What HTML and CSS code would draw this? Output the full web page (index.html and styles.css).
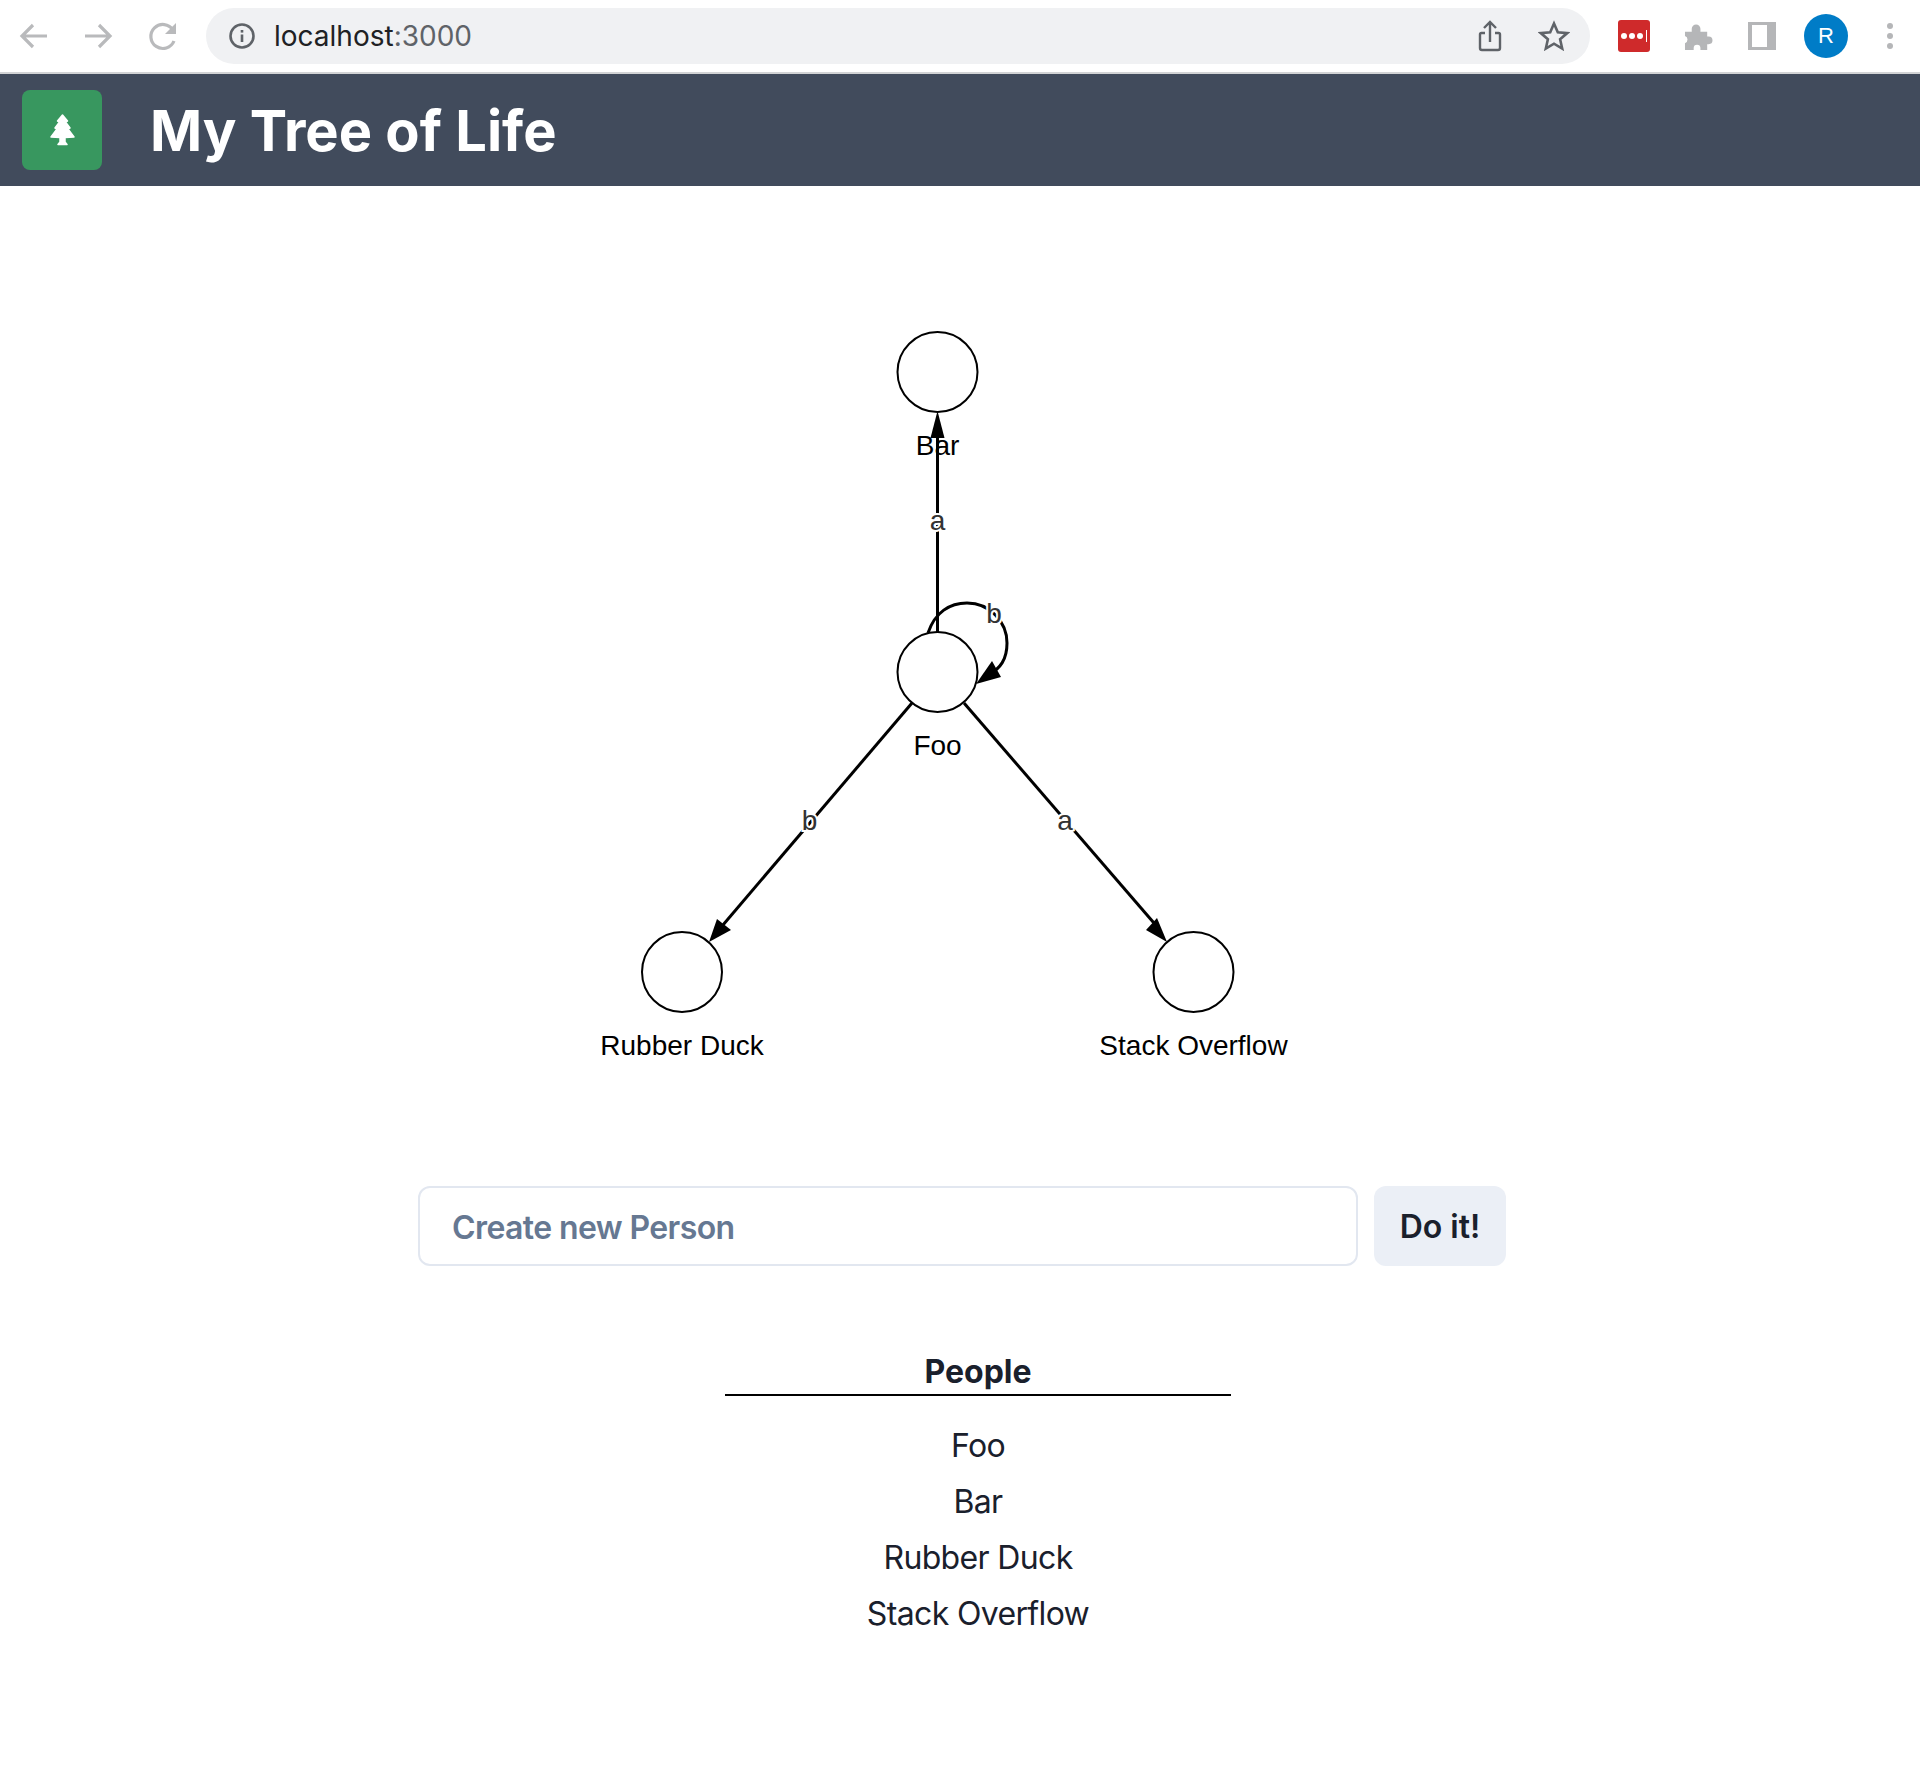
FILE: index.html
```html
<!DOCTYPE html>
<html lang="en">
<head>
<meta charset="utf-8">
<title>My Tree of Life</title>
<link rel="stylesheet" href="styles.css">
</head>
<body>
<div class="browser">
  <div class="nav">
    <svg class="ic" width="32" height="32" viewBox="0 0 32 32"><path d="M29 16H5M15 5 4 16l11 11" class="s-grey"/></svg>
    <svg class="ic" width="32" height="32" viewBox="0 0 32 32"><path d="M3 16h24M17 5l11 11-11 11" class="s-grey"/></svg>
    <svg class="ic" width="32" height="32" viewBox="-2 0 32 32"><path d="M26 21a12 12 0 1 1-1-11" class="s-grey"/><path d="M28 3v11H17z" class="f-grey"/></svg>
  </div>
  <div class="omni">
    <svg width="28" height="28" viewBox="0 0 28 28"><circle cx="14" cy="14" r="11.5" fill="none" stroke="#5f6368" stroke-width="2.6"/><rect x="12.7" y="12.5" width="2.6" height="7.5" fill="#5f6368"/><rect x="12.7" y="8" width="2.6" height="2.6" fill="#5f6368"/></svg>
    <span class="url">localhost<span class="port">:3000</span></span>
    <span class="grow"></span>
    <svg width="28" height="32" viewBox="0 0 28 32"><path d="M9 13H5.500A1.500 1.500 0 0 0 4 14.500V28a2 2 0 0 0 2 2h16a2 2 0 0 0 2-2V14.500A1.500 1.500 0 0 0 22.500 13H19M14 22V3M8 8l6-6 6 6" fill="none" stroke="#5f6368" stroke-width="2.4"/></svg>
    <svg class="star" width="32" height="32" viewBox="0 0 32 32"><path d="m16 3.500 3.800 8.700 9.400.9-7.100 6.200 2.100 9.200-8.200-4.800-8.200 4.800 2.100-9.200-7.100-6.200 9.400-.9z" fill="none" stroke="#5f6368" stroke-width="2.600"/></svg>
  </div>
  <div class="exts">
    <div class="lastpass"><i></i><i></i><i></i><b></b></div>
    <svg class="puzzle" width="29" height="28" viewBox="0 0 30 29"><path d="M1 10h7V7a4.500 4.500 0 0 1 9 0v3h7v5h1.500a4 4 0 0 1 0 8H24v6h-7v-2a3.500 3.500 0 0 0-7 0v2H1v-7a4 4 0 0 0 0-7.500z" fill="#b5b6b8"/></svg>
    <div class="panel"></div>
    <div class="avatar">R</div>
    <div class="dots"><i></i><i></i><i></i></div>
  </div>
</div>

<header class="topbar">
  <div class="logo">
    <svg class="tree" width="25" height="32" viewBox="0 0 25 32"><path d="M12.500 1 17.500 7 15.500 8 20 14 18 15 24 23 15 23.500 15 28 17 30.500 8 30.500 10 28 10 23.500 1 23 7 15 5 14 9.500 8 7.500 7z"/></svg>
  </div>
  <h1 class="title">My Tree of Life</h1>
</header>

<main class="main">
  <svg class="graph" width="1920" height="972" viewBox="0 186 1920 972">
    <g class="edges">
      <path d="M937.500 632V420"/>
      <path d="M928 633C935 612 950 603 967 603C990 603 1007 622 1007 643C1007 660 1000 668 990 674"/>
      <path d="M912 703 717 932"/>
      <path d="M964 703 1160 930"/>
    </g>
    <g class="heads">
      <polygon points="937.500,411 930.500,438 944.500,438"/>
      <polygon points="976,684 992,661 1001,677"/>
      <polygon points="709,942 717,919 731,930"/>
      <polygon points="1167,942 1146,930 1157,918"/>
    </g>
    <g class="nodes">
      <circle cx="937.500" cy="372" r="40"/>
      <circle cx="937.500" cy="672" r="40"/>
      <circle cx="682" cy="972" r="40"/>
      <circle cx="1193.500" cy="972" r="40"/>
    </g>
    <g class="edge-labels">
      <text x="937.500" y="530">a</text>
      <text x="994" y="623">b</text>
      <text x="809.500" y="830">b</text>
      <text x="1065" y="830">a</text>
    </g>
    <g class="node-labels">
      <text x="937.500" y="455">Bar</text>
      <text x="937.500" y="755">Foo</text>
      <text x="682" y="1055">Rubber Duck</text>
      <text x="1193.500" y="1055">Stack Overflow</text>
    </g>
  </svg>

  <form class="create">
    <input class="create-input" type="text" placeholder="Create new Person">
    <button class="create-btn" type="button">Do it!</button>
  </form>

  <section class="people">
    <h2 class="people-head">People</h2>
    <ul class="people-list">
      <li>Foo</li>
      <li>Bar</li>
      <li>Rubber Duck</li>
      <li>Stack Overflow</li>
    </ul>
  </section>
</main>
</body>
</html>
```
FILE: styles.css
```css
* { box-sizing: border-box; }
html, body { margin: 0; padding: 0; background: #fff; }
body { font-family: Inter, "Liberation Sans", sans-serif; color: #1a202c; min-height: 1778px; overflow: hidden; }

.browser { height: 74px; display: flex; align-items: center; padding: 0 14px 0 18px; background: #fff; border-bottom: 2px solid #d2d3d5; }
.nav { display: flex; gap: 32px; width: 188px; flex: none; }
.ic { flex: none; }
.s-grey { fill: none; stroke: #b9babc; stroke-width: 3.200; }
.f-grey { fill: #b9babc; }
.omni { width: 1384px; height: 56px; border-radius: 28px; background: #f0f1f3; display: flex; align-items: center; padding: 0 20px 0 22px; flex: none; }
.url { margin-left: 18px; font-size: 28px; color: #202124; font-family: Inter, sans-serif; }
.port { color: #5f6368; }
.grow { flex: 1; }
.star { margin-left: 34px; }
.exts { display: flex; align-items: center; margin-left: 28px; flex: 1; }
.lastpass { width: 32px; height: 32px; background: #cf2a2b; border-radius: 3px; display: flex; align-items: center; gap: 2px; padding-left: 3px; flex: none; }
.lastpass i { width: 6px; height: 6px; border-radius: 50%; background: #fff; }
.lastpass b { width: 1px; height: 12px; background: #fff; margin-left: 1px; }
.puzzle { margin-left: 34px; flex: none; }
.panel { width: 28px; height: 28px; margin-left: 35px; background: #fff; border: solid #b5b6b8; border-width: 3px 9px 3px 4px; flex: none; }
.avatar { width: 44px; height: 44px; border-radius: 50%; margin-left: 28px; background: #007cc7; color: #fff; font-family: "Liberation Sans", sans-serif; font-size: 22px; display: flex; align-items: center; justify-content: center; flex: none; }
.dots { display: flex; flex-direction: column; gap: 4px; margin-left: 39px; }
.dots i { width: 6px; height: 6px; border-radius: 50%; background: #b5b6b8; }

.topbar { height: 112px; background: #414b5c; display: flex; align-items: center; padding-left: 22px; }
.logo { width: 80px; height: 80px; border-radius: 8px; background: #38975f; display: flex; align-items: center; justify-content: center; }
.tree path { fill: #fff; stroke: #fff; stroke-width: 1.500; stroke-linejoin: round; }
.title { margin: 2px 0 0 48px; color: #fff; font-size: 56px; font-weight: 700; line-height: 1; }

.main { display: flex; flex-direction: column; align-items: flex-start; }
.graph { display: block; }
.edges path { fill: none; stroke: #000; stroke-width: 3; }
.heads polygon { fill: #000; }
.nodes circle { fill: #fff; stroke: #000; stroke-width: 2; }
.edge-labels text { font-family: "Liberation Sans", sans-serif; font-size: 28px; fill: #333; stroke: #fff; stroke-width: 4px; paint-order: stroke; text-anchor: middle; }
.node-labels text { font-family: "Liberation Sans", sans-serif; font-size: 28px; fill: #000; text-anchor: middle; }

.create { display: flex; gap: 16px; margin: 28px 0 0 418px; }
.create-input { width: 940px; height: 80px; border: 2px solid #e2e7f0; border-radius: 12px; padding: 2px 32px 0; font: 600 32px Inter, sans-serif; letter-spacing: -0.6px; color: #1a202c; outline: none; background: #fff; }
.create-input::placeholder { color: #667892; opacity: 1; }
.create-btn { width: 132px; height: 80px; border: 0; border-radius: 12px; background: #ebeff6; font: 600 32px Inter, sans-serif; color: #1a202c; padding: 0; }

.people { width: 506px; margin: 84px 0 0 725px; text-align: center; }
.people-head { margin: 0; font-size: 32px; font-weight: 700; line-height: 44px; border-bottom: 2px solid #000; }
.people-list { list-style: none; margin: 22px 0 0; padding: 0; }
.people-list li { font-size: 32px; line-height: 56px; letter-spacing: -0.65px; }
```
